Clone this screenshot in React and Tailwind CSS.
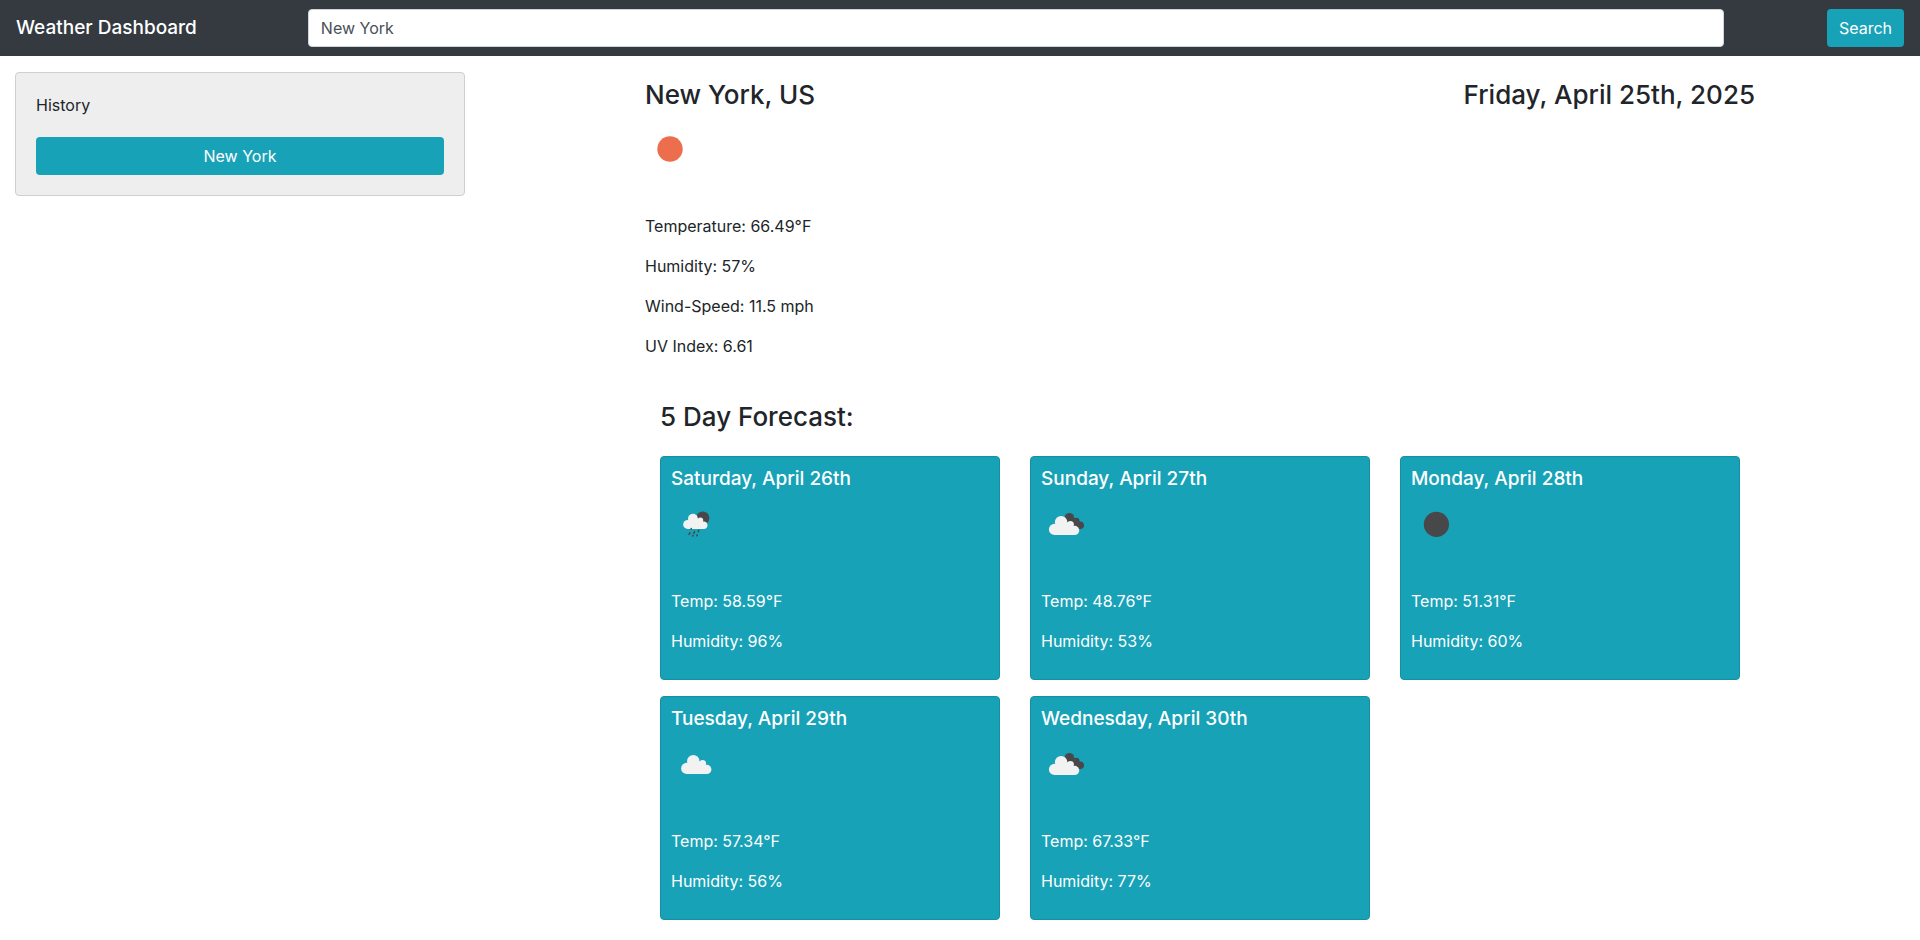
const forecast = [
  { day: 'Saturday, April 26th', icon: 'rain', label: 'Rain', temp: '58.59', humidity: 96 },
  { day: 'Sunday, April 27th', icon: 'broken', label: 'Broken clouds', temp: '48.76', humidity: 53 },
  { day: 'Monday, April 28th', icon: 'clear', label: 'Clear night', temp: '51.31', humidity: 60 },
  { day: 'Tuesday, April 29th', icon: 'cloud', label: 'Cloudy', temp: '57.34', humidity: 56 },
  { day: 'Wednesday, April 30th', icon: 'broken', label: 'Broken clouds', temp: '67.33', humidity: 77 },
];

function Cloud(props) {
  return (
    <g fill="#f2f2f2" {...props}>
      <circle cx="22.3" cy="22.2" r="6.2" />
      <circle cx="15.7" cy="29.4" r="5.6" />
      <circle cx="31.6" cy="24.4" r="3.5" />
      <circle cx="35.8" cy="30.4" r="4.6" />
      <path d="M15.7 28 L18 22 H27 L31.6 24 L36 28 V35 H15.7Z" />
    </g>
  );
}

function WeatherIcon({ name, label }) {
  return (
    <svg viewBox="0 0 50 50" className="mb-10 block size-[50px]" role="img" aria-label={label}>
      {name === 'sun' && <circle cx="25" cy="25" r="12.7" fill="#ec6e4c" />}
      {name === 'clear' && <circle cx="25.4" cy="25.4" r="12.6" fill="#48484a" />}
      {name === 'cloud' && <Cloud />}
      {name === 'broken' && (
        <>
          <g fill="#48484a">
            <circle cx="28.4" cy="18.6" r="4.7" />
            <circle cx="35.2" cy="22.2" r="3.4" />
            <circle cx="39.2" cy="26.2" r="3.8" />
            <path d="M28 17 L35 20 L40 24 L38 30 L30 28Z" />
          </g>
          <Cloud transform="translate(-2.2 1)" />
        </>
      )}
      {name === 'rain' && (
        <>
          <circle cx="31.8" cy="19" r="6.6" fill="#48484a" />
          <Cloud transform="translate(4.1 1.9) scale(0.8)" />
          <g stroke="#48484a" strokeWidth="1.5" strokeLinecap="round">
            <path d="M20.2 29.4v.6M18.9 33.8l-.8 1.6M23.6 32.6l-.8 1.8M27.8 31.4l-.6 1.2M22 36.4l-.4.6M26.2 36l-.5.8" />
          </g>
        </>
      )}
    </svg>
  );
}

function ForecastCard({ day, icon, label, temp, humidity }) {
  return (
    <article className="rounded border border-[#178fa1] bg-[#17a2b8] p-2.5 text-white">
      <h3 className="mb-2 text-[19px] leading-6 font-medium">{day}</h3>
      <WeatherIcon name={icon} label={label} />
      <p className="mb-4">Temp: {temp}°F</p>
      <p className="mb-4">Humidity: {humidity}%</p>
    </article>
  );
}

export default function App() {
  return (
    <div className="font-['Inter',sans-serif] text-[16px] leading-6 text-[#212529]">
      <header className="bg-[#343a40] px-4 py-[9px]">
        <form className="flex items-center justify-between" onSubmit={(e) => e.preventDefault()}>
          <h1 className="mr-2 text-[19px] leading-[30px] font-medium text-white">Weather Dashboard</h1>
          <input
            type="text"
            aria-label="City"
            defaultValue="New York"
            className="h-[38px] w-3/4 rounded border border-[#ced4da] bg-white px-3 text-[#495057]"
          />
          <button type="submit" className="h-[38px] rounded bg-[#17a2b8] px-3 text-white">
            Search
          </button>
        </form>
      </header>

      <div className="grid grid-cols-4">
        <aside className="px-[15px] pt-4">
          <section className="rounded border border-[#cfcfcf] bg-[#eeeeee] p-5">
            <h2 className="mb-5">History</h2>
            <button type="button" className="h-[38px] w-full rounded bg-[#17a2b8] text-white">
              New York
            </button>
          </section>
        </aside>

        <main className="col-span-3 mx-auto w-full max-w-[1140px] px-[15px] pt-[22px]">
          <section>
            <div className="mb-3 flex justify-between text-[26px] leading-[34px] font-medium">
              <h2>New York, US</h2>
              <p>Friday, April 25th, 2025</p>
            </div>
            <WeatherIcon name="sun" label="Clear sky" />
            <p className="mb-4">Temperature: 66.49°F</p>
            <p className="mb-4">Humidity: 57%</p>
            <p className="mb-4">Wind-Speed: 11.5 mph</p>
            <p className="mb-[42px]">UV Index: 6.61</p>
          </section>
          <section className="px-[15px]">
            <h2 className="mb-[22px] text-[26px] leading-[34px] font-medium">5 Day Forecast:</h2>
            <div className="grid grid-cols-3 gap-x-[30px] gap-y-4">
              {forecast.map((entry) => (
                <ForecastCard key={entry.day} {...entry} />
              ))}
            </div>
          </section>
        </main>
      </div>
    </div>
  );
}
